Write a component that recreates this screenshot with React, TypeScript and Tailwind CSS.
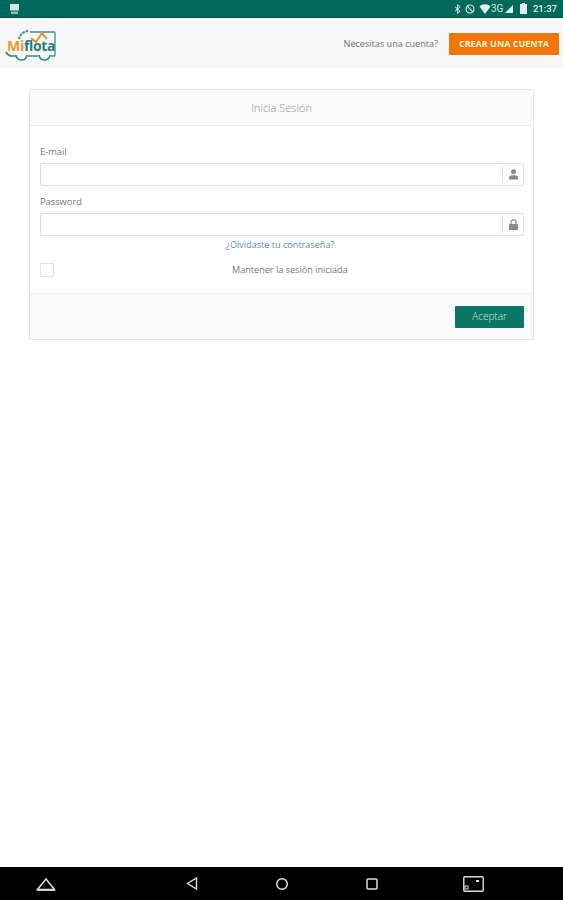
function StatusBar() {
  return (
    <div className="flex h-[18px] items-center justify-between border-b border-[#03493f] bg-[#00695c] pl-[10px] pr-[6px] text-white">
      <svg width="9" height="10" viewBox="0 0 9 10" fill="#d5e6e2">
        <path d="M0 0h9v6.500H0z" />
        <path d="M1 7.500h7V10H1z" opacity="0.7" />
      </svg>
      <div className="flex items-center">
        <svg width="7" height="10" viewBox="0 0 8 11" fill="none" stroke="#e2eeeb" strokeWidth="1.100">
          <path d="M1 3l6 5-3 2.500v-10L7 3 1 8" />
        </svg>
        <svg width="10" height="10" viewBox="0 0 11 11" fill="none" stroke="#e2eeeb" strokeWidth="1.200" className="ml-[4px]">
          <circle cx="5.500" cy="5.500" r="4.400" />
          <path d="M2.400 2.400l6.200 6.200" />
        </svg>
        <svg width="12" height="10" viewBox="0 0 11 10" fill="#e2eeeb" className="ml-[4px]">
          <path d="M0 2.500C3 -.5 8-.5 11 2.500L5.500 10z" />
        </svg>
        <span className="w-[13px] text-[10px] leading-none text-[#d5e6e2] [font-family:'Roboto',sans-serif]">3G</span>
        <svg width="8" height="8" viewBox="0 0 8 8" fill="#e2eeeb" className="ml-[1px]">
          <path d="M8 0v8H0z" />
        </svg>
        <svg width="7" height="11" viewBox="0 0 7 11" fill="#e2eeeb" className="ml-[7px]">
          <path d="M2 0h3v1h2v10H0V1h2z" />
        </svg>
        <span className="ml-[6px] text-[9.500px] font-medium leading-none text-[#e2eeeb] [font-family:'Roboto',sans-serif]">
          21:37
        </span>
      </div>
    </div>
  );
}

function Logo() {
  return (
    <div className="relative h-[34px] w-[52px]">
      <svg width="52" height="34" viewBox="0 0 52 34" fill="none" className="absolute left-0 top-0">
        <path d="M15 12c1-5 5-8 10-8" stroke="#2f8f87" strokeWidth="2" strokeDasharray="2.500 1" />
        <path d="M26 5h24q1 0 1 1v22q0 1-1 1h-3" stroke="#3f8f8c" strokeWidth="1.300" />
        <path d="M27 11l5 4 6-9 5 6" stroke="#e8952c" strokeWidth="2" />
        <path d="M2 25q2 4 6 4h4M24 29h10" stroke="#2f8f87" strokeWidth="1.700" />
        <path d="M12 28a5.500 5 0 0 0 11 0M35 28a5.500 5 0 0 0 11 0" stroke="#2f8f87" strokeWidth="1.700" />
      </svg>
      <div className="absolute left-[3px] top-[9px] flex items-baseline text-[14px] font-bold leading-[20px] tracking-[-0.3px] [font-family:'Open_Sans',sans-serif]">
        <span className="text-[#ec9a2e]">Mi</span>
        <span className="text-[#1f7f7a]">flota</span>
      </div>
    </div>
  );
}

function UserGlyph() {
  return (
    <svg width="9" height="11" viewBox="0 0 9 11" fill="#8a8a8a">
      <circle cx="4.500" cy="2.700" r="2.500" />
      <path d="M0 10.500V8.500Q0 6.500 2.500 6.200h4Q9 6.500 9 8.500v2z" />
    </svg>
  );
}

function LockGlyph() {
  return (
    <svg width="9" height="11" viewBox="0 0 9 11" fill="none">
      <path d="M2 5V3.300a2.500 2.500 0 0 1 5 0V5" stroke="#8a8a8a" strokeWidth="1.200" />
      <rect x="0" y="5" width="9" height="6" rx="0.500" fill="#8a8a8a" />
    </svg>
  );
}

function Field({ label, icon }: { label: string; icon: React.ReactNode }) {
  return (
    <div>
      <label className="mb-[4px] block pt-[1px] text-[9.300px] leading-[14px] text-[#777777]">{label}</label>
      <div className="flex h-[23px] items-center rounded-[2px] border border-[#dedede] bg-white">
        <input type="text" className="h-full min-w-0 flex-1 bg-transparent outline-none" />
        <div className="flex h-[17px] w-[21px] items-center justify-center border-l border-[#dedede]">
          {icon}
        </div>
      </div>
    </div>
  );
}

export default function App() {
  return (
    <div className="flex h-[900px] flex-col bg-white [font-family:'Open_Sans',sans-serif]">
      <StatusBar />

      <header className="flex h-[50px] items-center justify-between bg-[#f7f7f7] pl-[4px] pr-[4px] pt-[2px]">
        <Logo />
        <div className="flex items-center gap-[11px]">
          <span className="text-[9.100px] text-[#707070]">Necesitas una cuenta?</span>
          <button
            type="button"
            className="h-[22px] w-[110px] rounded-[1px] bg-[#ef7607] text-[9px] font-bold text-[#fff0d8]"
          >
            CREAR UNA CUENTA
          </button>
        </div>
      </header>

      <main className="flex-1 pl-[29px] pr-[29px] pt-[21px]">
        <div className="rounded-[2px] border border-[#e6e6e6] bg-white">
          <div className="flex h-[36px] items-center justify-center border-b border-[#ececec] bg-[#fafafa] pt-[1px] text-[11px] font-light text-[#8f8f8f]">
            Inicia Sesión
          </div>

          <div className="pl-[10px] pr-[9px] pt-[18px]">
            <div className="flex flex-col gap-[8px]">
              <Field label="E-mail" icon={<UserGlyph />} />
              <Field label="Password" icon={<LockGlyph />} />
            </div>
            <div className="mt-[2px] pl-[186px] text-[9.100px] leading-[14px] text-[#5b8cab]">¿Olvidaste tu contraseña?</div>
            <div className="mt-[10px] flex h-[16px] items-center">
              <span className="h-[14px] w-[14px] rounded-[1px] border border-[#e2e2e2] bg-white" />
              <span className="ml-[178px] text-[9.100px] text-[#777777]">Mantener la sesión iniciada</span>
            </div>
          </div>

          <div className="mt-[15px] flex h-[46px] items-center justify-end border-t border-[#ececec] bg-[#fafafa] pr-[9px]">
            <button
              type="button"
              className="h-[22px] w-[69px] rounded-[1px] bg-[#0b7766] text-[10px] font-light text-[#cfe6e0]"
            >
              Aceptar
            </button>
          </div>
        </div>
      </main>

      <nav className="flex h-[33px] items-center bg-black">
        <svg width="20" height="14" viewBox="0 0 20 14" fill="none" stroke="#dddddd" strokeWidth="1.500" className="ml-[36px]">
          <path d="M1.500 12.500L10 2l8.500 10.500z" />
          <path d="M1 13h18" strokeWidth="1.800" />
        </svg>
        <svg width="12" height="13" viewBox="0 0 12 13" fill="none" stroke="#dddddd" strokeWidth="1.400" className="ml-[130px]">
          <path d="M10.500 1v11L1.500 6.500z" />
        </svg>
        <svg width="14" height="14" viewBox="0 0 14 14" fill="none" stroke="#dddddd" strokeWidth="1.500" className="ml-[77px]">
          <circle cx="7" cy="7" r="5.300" />
        </svg>
        <svg width="12" height="12" viewBox="0 0 12 12" fill="none" stroke="#dddddd" strokeWidth="1.500" className="ml-[77px]">
          <rect x="1" y="1" width="10" height="10" rx="1" />
        </svg>
        <svg width="21" height="16" viewBox="0 0 21 16" fill="none" className="ml-[85px]">
          <rect x="0.800" y="0.800" width="19.400" height="14.400" rx="1" stroke="#dddddd" strokeWidth="1.400" />
          <rect x="13" y="4" width="3" height="2" fill="#dddddd" />
          <rect x="2" y="10" width="3" height="3" stroke="#dddddd" />
        </svg>
      </nav>
    </div>
  );
}
